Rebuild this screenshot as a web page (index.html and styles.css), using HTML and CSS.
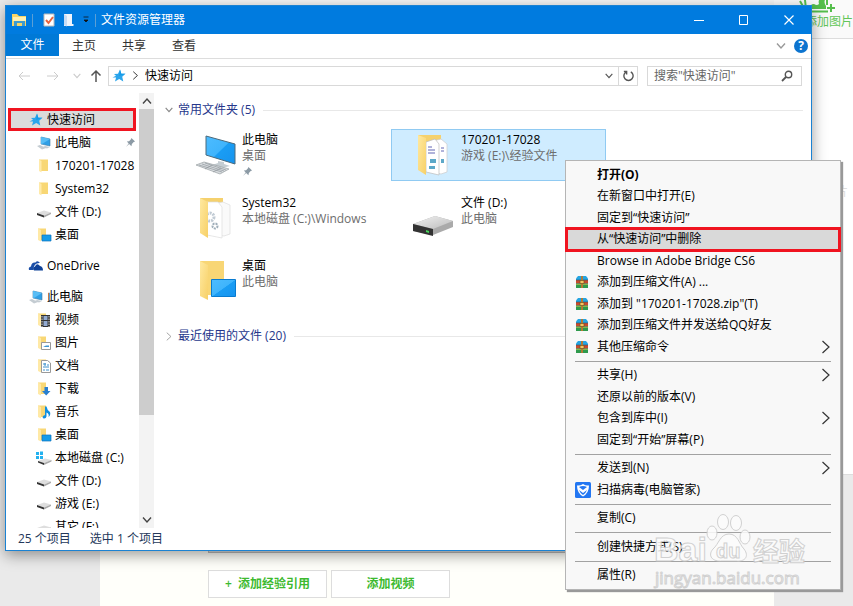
FILE: index.html
```html
<!DOCTYPE html>
<html lang="zh-CN">
<head>
<meta charset="utf-8">
<title>文件资源管理器</title>
<link rel="stylesheet" href="styles.css">
</head>
<body>
<svg class="defs" aria-hidden="true">
  <linearGradient id="gScreen" x1="0" y1="0" x2="1" y2="1"><stop offset="0" stop-color="#4dbcff"/><stop offset=".5" stop-color="#3fb4fc"/><stop offset=".52" stop-color="#1a9df4"/><stop offset="1" stop-color="#1693ee"/></linearGradient>
  <linearGradient id="gFold" x1="0" y1="0" x2="1" y2="1"><stop offset="0" stop-color="#ffe9a0"/><stop offset="1" stop-color="#f7d067"/></linearGradient>
  <linearGradient id="gDisk" x1="0" y1="0" x2="1" y2="1"><stop offset="0" stop-color="#f2f2f2"/><stop offset="1" stop-color="#bcbcbc"/></linearGradient>
  <symbol id="star" viewBox="0 0 14 14"><path d="M8 .5 9.300 4.700 13.500 4.800 10.200 7.700 11.300 12.500 7.200 10 3 12.600 4.100 8.500H.5L4 6.800 2 4.900 6 4.700z" fill="#2ba5ec"/><path d="M8 .5 9.300 4.700 13.500 4.800 7.200 7z" fill="#169be8"/></symbol>
  <symbol id="pc" viewBox="0 0 16 16"><path d="M5 2 14 4V11L5 9z" fill="#2f9fe6" stroke="#3f7ea8" stroke-width=".6"/><path d="M5 2 14 4 6 9 5 8.800z" fill="#58bdf5"/><path d="M9 11 14 12 11 13.500 7 12zM1 11 4 10 10 13 6 14.500z" fill="#c4ccd2"/></symbol>
  <symbol id="fold" viewBox="0 0 16 16"><path d="M3 1.500H12V13H3z" fill="#f8d775"/><path d="M3 1.500 5.500 3V14.500L3 13z" fill="#ffeaa9"/></symbol>
  <symbol id="desk" viewBox="0 0 16 16"><use href="#foldw"/><path d="M6 8H15V14H6z" fill="#159be9" stroke="#0b74bd" stroke-width=".7"/></symbol>
  <symbol id="foldw" viewBox="0 0 16 16"><path d="M2 1.500H10V13H2z" fill="#f8d775"/><path d="M2 1.500 5 3V14.500L2 13z" fill="#ffe9a6"/></symbol>
  <symbol id="drive" viewBox="0 0 16 16"><path d="M1 9 8 6.500 15 8.500 8 11.500z" fill="#dedede"/><path d="M1 9 8 11.500V13.500L1 11z" fill="#333"/><path d="M8 11.500 15 8.500V10L8 13.500z" fill="#aaa"/></symbol>
  <symbol id="winc" viewBox="0 0 16 16"><path d="M0 2H3V5H0zM4 1.500H7V5H4zM0 6H3V9H0zM4 6H7V9H4z" fill="#23b1ef"/><path d="M2 11 9 8.500 15.500 10 8 13z" fill="#dedede"/><path d="M2 11 8 13V15L2 12.500z" fill="#333"/><path d="M8 13 15.500 10V11.500L8 15z" fill="#aaa"/></symbol>
  <symbol id="cloud" viewBox="0 0 16 16"><path d="M1 12Q0 9 3 8.500 3.500 4 7.500 4.500 9.500 2 12 5 5.500 4.500 5.500 12z" fill="#1b4fa8"/><path d="M6 12.500Q4 9.500 7 8.500 9 4.500 12 8 15 8.500 15 12.500z" fill="#0f4298"/></symbol>
  <symbol id="video" viewBox="0 0 16 16"><use href="#foldw"/><path d="M5 3H14V15H5z" fill="#333"/><path d="M7.500 4H11.500V8H7.500zM7.500 9H11.500V14H7.500z" fill="#92aad0"/><path d="M6 4V15M13 4V15" stroke="#ddd" stroke-dasharray="1.500 1"/></symbol>
  <symbol id="pict" viewBox="0 0 16 16"><use href="#foldw"/><path d="M5.500 7.500H14.500V14.500H5.500z" fill="#fff" stroke="#999"/><path d="M7 12 10 10.500H13V12z" fill="#3d94d0"/></symbol>
  <symbol id="docs" viewBox="0 0 16 16"><use href="#foldw"/><path d="M5.500 2.500H11.500L14.500 5V14.500H5.500z" fill="#fff" stroke="#999"/><path d="M7 6H10M11 7H13M7 9H13M7 12H9M10 12H13M9 5V8" stroke="#3c91cc"/></symbol>
  <symbol id="down" viewBox="0 0 16 16"><use href="#foldw"/><path d="M8.500 6H12V10H14.500L10.200 14.500 6 10H8.500z" fill="#287fd0"/></symbol>
  <symbol id="music" viewBox="0 0 16 16"><use href="#foldw"/><path d="M9 2.500H10.500Q11 6 14 8 15 11 12.500 13 13.500 9.500 10.500 8.500V12.500Q10 15 7.500 14.500 5 12.500 9 11z" fill="#118fe0"/></symbol>
  <symbol id="pin" viewBox="0 0 12 12"><path d="M7 1 11 5 9.500 5.500 7.500 7.500 7 10 4.500 7.500 1 11 4 7 2 5 4.500 4.500 6.500 2.500z" fill="#8c9aa5"/></symbol>
  <symbol id="chevR" viewBox="0 0 10 14"><path d="M1.500 1 8 7 1.500 13" fill="none" stroke="currentColor" stroke-width="1.200"/></symbol>
  <symbol id="chevD" viewBox="0 0 12 8"><path d="M2 1.500 6 6 10 1.500" fill="none" stroke="currentColor" stroke-width="1.400"/></symbol>
  <symbol id="rar" viewBox="0 0 14 14"><path d="M3 1H11L13 3.500V5H1V3.500z" fill="#25a5e2"/><path d="M1 5H13V8H1z" fill="#c94a2c"/><path d="M1 8H13V10H1z" fill="#e3d54a"/><path d="M1 9.500H13V13H1z" fill="#2f9a4d"/><path d="M1 5H13M1 8.500H13" stroke="#29506b" stroke-width=".6"/><path d="M6 1H8V13H6z" fill="#b27a35"/><path d="M5 5.500H9V8.500H5z" fill="#f4c563" stroke="#725522" stroke-width=".7"/></symbol>
</svg>

<div class="page">
  <div class="gutter"></div>
  <main class="editor">
    <div class="textarea-edge"></div>
    <div class="actions">
      <button class="add" type="button">+&nbsp; 添加经验引用</button>
      <button class="add" type="button">添加视频</button>
    </div>
  </main>
  <aside class="side">
    <div class="side-tools">
      <svg class="picture" viewBox="0 0 40 14"><path d="M4 1 9 10M9 0 10 9M4 6 10 10" fill="none" stroke="#55be4c" stroke-width="2"/><path d="M13 11.500H32M31 0V5" fill="none" stroke="#55be4c" stroke-width="2"/><path d="M13 9Q14 4 18 4 21 6 23 4 22 1 24-2H30Q27 2 30 6V9z" fill="#55be4c"/><path d="M31 8H39M35 4V12" stroke="#55be4c" stroke-width="2"/></svg>
      <a class="side-link" href="#">添加图片</a>
    </div>
    <div class="side-body"><span>图片</span></div>
    <div class="side-foot"></div>
  </aside>
</div>

<section class="window">
  <header class="titlebar">
    <svg class="t-folder" viewBox="0 0 16 14"><path d="M1 1H6L8 3H15V13H1z" fill="#f7d568"/><path d="M2 4H15V8H2z" fill="#fff0b0"/><path d="M3 13V8H14V13H11V10H6V13z" fill="#3d9bd1"/></svg>
    <i class="bar"></i>
    <svg class="t-check" viewBox="0 0 12 14"><path d="M1 1H11V13H1z" fill="#fff" stroke="#bbb"/><path d="M3 7 5.500 10 10 4" fill="none" stroke="#e8643f" stroke-width="2"/></svg>
    <svg class="t-new" viewBox="0 0 12 14"><path d="M1 1H9V11H10.500V13H1z" fill="#f0f4fb"/><path d="M1 1 4 3V13.500L1 12z" fill="#c8dcf5"/></svg>
    <svg class="t-drop" viewBox="0 0 8 8"><path d="M1.500 1H6.500M2 4H6L4 6z" fill="#111" stroke="#111" stroke-width=".8"/></svg>
    <i class="bar"></i>
    <h1>文件资源管理器</h1>
    <div class="controls">
      <button type="button" aria-label="最小化"><svg viewBox="0 0 12 12"><path d="M1 6.500H11" stroke="#fff"/></svg></button>
      <button type="button" aria-label="最大化"><svg viewBox="0 0 12 12"><path d="M1.500 1.500H9.500V10.500H1.500z" fill="none" stroke="#fff"/></svg></button>
      <button type="button" aria-label="关闭"><svg viewBox="0 0 12 12"><path d="M1.500 1.500 10.500 10.500M10.500 1.500 1.500 10.500" stroke="#fff" stroke-width="1.200"/></svg></button>
    </div>
  </header>
  <nav class="tabs">
    <button type="button" class="file">文件</button>
    <button type="button">主页</button>
    <button type="button">共享</button>
    <button type="button">查看</button>
    <svg class="expand" viewBox="0 0 12 8"><use href="#chevD"/></svg>
    <button type="button" class="help" aria-label="帮助">?</button>
  </nav>
  <div class="address">
    <svg class="arrow off" viewBox="0 0 14 12"><path d="M12 6H1M5 2 1 6 5 10" fill="none" stroke="currentColor"/></svg>
    <svg class="arrow off" viewBox="0 0 14 12"><path d="M2 6H13M9 2 13 6 9 10" fill="none" stroke="currentColor"/></svg>
    <svg class="small off" viewBox="0 0 12 8"><use href="#chevD"/></svg>
    <svg class="up" viewBox="0 0 12 14"><path d="M6 13V2M1.500 6.500 6 2 10.500 6.500" fill="none" stroke="currentColor" stroke-width="1.500"/></svg>
    <div class="path">
      <svg class="i14"><use href="#star"/></svg>
      <svg class="crumb"><use href="#chevR"/></svg>
      <span>快速访问</span>
      <svg class="small"><use href="#chevD"/></svg>
      <button type="button" class="refresh" aria-label="刷新"><svg viewBox="0 0 14 14"><path d="M9.500 3A5 5 0 1 1 4.500 3M2 2.500H5V6" fill="none" stroke="#555" stroke-width="1.500"/></svg></button>
    </div>
    <label class="search"><input type="text" aria-label="搜索" placeholder='搜索"快速访问"'>
      <svg viewBox="0 0 12 12"><circle cx="7.500" cy="4.500" r="3.200" fill="none" stroke="#555" stroke-width="1.400"/><path d="M5 7 1 11" stroke="#555" stroke-width="1.800"/></svg></label>
  </div>
  <div class="body">
    <nav class="tree">
      <ul>
        <li><a class="top active" href="#"><svg><use href="#star"/></svg>快速访问</a></li>
        <li><a href="#"><svg><use href="#pc"/></svg>此电脑<svg class="pin"><use href="#pin"/></svg></a></li>
        <li><a href="#"><svg><use href="#fold"/></svg>170201-17028</a></li>
        <li><a href="#"><svg><use href="#fold"/></svg>System32</a></li>
        <li><a href="#"><svg><use href="#drive"/></svg>文件 (D:)</a></li>
        <li><a href="#"><svg><use href="#desk"/></svg>桌面</a></li>
      </ul>
      <ul>
        <li><a class="top" href="#"><svg><use href="#cloud"/></svg>OneDrive</a></li>
      </ul>
      <ul>
        <li><a class="top" href="#"><svg><use href="#pc"/></svg>此电脑</a></li>
        <li><a href="#"><svg><use href="#video"/></svg>视频</a></li>
        <li><a href="#"><svg><use href="#pict"/></svg>图片</a></li>
        <li><a href="#"><svg><use href="#docs"/></svg>文档</a></li>
        <li><a href="#"><svg><use href="#down"/></svg>下载</a></li>
        <li><a href="#"><svg><use href="#music"/></svg>音乐</a></li>
        <li><a href="#"><svg><use href="#desk"/></svg>桌面</a></li>
        <li><a href="#"><svg><use href="#winc"/></svg>本地磁盘 (C:)</a></li>
        <li><a href="#"><svg><use href="#drive"/></svg>文件 (D:)</a></li>
        <li><a href="#"><svg><use href="#drive"/></svg>游戏 (E:)</a></li>
        <li><a href="#"><svg><use href="#drive"/></svg>其它 (F:)</a></li>
      </ul>
    </nav>
    <div class="scroll">
      <svg class="flip"><use href="#chevD"/></svg>
      <div class="track"><div class="thumb"></div></div>
      <svg><use href="#chevD"/></svg>
    </div>
    <div class="content">
      <h2><svg class="small"><use href="#chevD"/></svg>常用文件夹 (5)</h2>
      <div class="tiles">
        <article class="tile">
          <svg viewBox="0 0 48 48"><path d="M18 6 47 14V34L18 25z" fill="url(#gScreen)" stroke="#4b6a7c"/><path d="M30 31 36 32V34L42 36 34 38 24 35 30 33z" fill="#c5cdd2"/><path d="M8 35 16 32 41 39 32 44z" fill="#d8dcdf" stroke="#9aa0a4" stroke-width=".7"/><path d="M11 35 34 42M14 34 36 41M17 33 38 40M17 39 24 35M25 42 33 38" stroke="#91989d" stroke-width=".7"/></svg>
          <div><b>此电脑</b><span>桌面</span><svg class="pin"><use href="#pin"/></svg></div>
        </article>
        <article class="tile selected">
          <svg viewBox="0 0 48 48"><path d="M11 5H34V38H11z" fill="#f5d16e"/><path d="M22 12 34 9 40 14V42L34 44 22 41z" fill="#fff" stroke="#ccc" stroke-width=".7"/><path d="M19 12 28 9 32 14V45L19 42z" fill="#fff" stroke="#bbb" stroke-width=".7"/><path d="M21 17H25M21 20H28M21 23H28M34 18H37M34 21H37" stroke="#6366b5"/><path d="M23 29H29V33H23zM22 36H28V39H22zM34 29H37V33H34z" fill="#5da8c8"/><path d="M11 5 19 8V45L11 40z" fill="url(#gFold)"/></svg>
          <div><b>170201-17028</b><span>游戏 (E:)\经验文件</span></div>
        </article>
        <article class="tile">
          <svg viewBox="0 0 48 48"><path d="M12 5H35V38H12z" fill="#f5d16e"/><path d="M22 11 35 9 42 12V41L36 43 22 41z" fill="#fafafa" stroke="#ddd" stroke-width=".7"/><path d="M19 9 30 9 34 14V45L19 42z" fill="#fff" stroke="#ddd" stroke-width=".7"/><circle cx="22" cy="24" r="4" fill="none" stroke="#c1cbd4" stroke-width="3" stroke-dasharray="2 1"/><circle cx="27" cy="33" r="2.500" fill="none" stroke="#9faeb9" stroke-width="2" stroke-dasharray="2 1"/><path d="M12 5 20 9V45L12 40z" fill="url(#gFold)"/></svg>
          <div><b>System32</b><span>本地磁盘 (C:)\Windows</span></div>
        </article>
        <article class="tile">
          <svg viewBox="0 0 48 48"><path d="M6 31 28 23 46 28V34L26 42 6 38z" fill="#aaa"/><path d="M6 31 28 23 46 28 26 36z" fill="url(#gDisk)"/><path d="M6 31 26 36V43L6 38z" fill="#333"/><path d="M19 37 22 38V40L19 39z" fill="#47d75a"/></svg>
          <div><b>文件 (D:)</b><span>此电脑</span></div>
        </article>
        <article class="tile">
          <svg viewBox="0 0 48 48"><path d="M12 5H36V39H12z" fill="#f8d675"/><path d="M12 5 20 9V44L12 40z" fill="url(#gFold)"/><path d="M23.500 23.500H47.500V40.500H23.500z" fill="url(#gScreen)" stroke="#087bd0"/></svg>
          <div><b>桌面</b><span>此电脑</span></div>
        </article>
      </div>
      <h2><svg class="crumb"><use href="#chevR"/></svg>最近使用的文件 (20)</h2>
    </div>
  </div>
  <footer class="status"><span>25 个项目</span><span>选中 1 个项目</span></footer>
</section>

<div class="menu" role="menu">
  <button type="button" role="menuitem" class="bold">打开(O)</button>
  <button type="button" role="menuitem">在新窗口中打开(E)</button>
  <button type="button" role="menuitem">固定到“快速访问”</button>
  <button type="button" role="menuitem" class="hot">从“快速访问”中删除</button>
  <button type="button" role="menuitem">Browse in Adobe Bridge CS6</button>
  <button type="button" role="menuitem"><svg class="ico"><use href="#rar"/></svg>添加到压缩文件(A) ...</button>
  <button type="button" role="menuitem"><svg class="ico"><use href="#rar"/></svg>添加到 "170201-17028.zip"(T)</button>
  <button type="button" role="menuitem"><svg class="ico"><use href="#rar"/></svg>添加到压缩文件并发送给QQ好友</button>
  <button type="button" role="menuitem"><svg class="ico"><use href="#rar"/></svg>其他压缩命令<svg class="more"><use href="#chevR"/></svg></button>
  <hr>
  <button type="button" role="menuitem">共享(H)<svg class="more"><use href="#chevR"/></svg></button>
  <button type="button" role="menuitem">还原以前的版本(V)</button>
  <button type="button" role="menuitem">包含到库中(I)<svg class="more"><use href="#chevR"/></svg></button>
  <button type="button" role="menuitem">固定到“开始”屏幕(P)</button>
  <hr>
  <button type="button" role="menuitem">发送到(N)<svg class="more"><use href="#chevR"/></svg></button>
  <button type="button" role="menuitem"><svg class="ico shield" viewBox="0 0 16 16"><rect width="16" height="16" rx="1.500" fill="#2377f2"/><path d="M8 2Q11 4 14 3.500 14 11 8 14.500 2 11 2 3.500 5 4 8 2z" fill="#fff"/><path d="M4 5Q8 3 12 5L8 8zM4 8 8 11 12 8Q11 11 8 13 5 11 4 8z" fill="#2377f2"/></svg>扫描病毒(电脑管家)</button>
  <hr>
  <button type="button" role="menuitem">复制(C)</button>
  <hr>
  <button type="button" role="menuitem">创建快捷方式(S)</button>
  <hr>
  <button type="button" role="menuitem">属性(R)</button>
</div>

<div class="watermark">
  <svg viewBox="0 0 156 76">
    <g class="mark">
      <text x="1" y="48" class="latin">Bai</text>
      <ellipse cx="59" cy="20" rx="5" ry="7"/><ellipse cx="70" cy="9" rx="5.500" ry="7.500"/><ellipse cx="83" cy="10" rx="5.500" ry="7.500"/><ellipse cx="92" cy="24" rx="5" ry="7"/>
      <path d="M76 21C85 21 86 31 91 36 97 44 91 49 83 48H69C60 49 54 43 60 36 66 31 67 21 76 21z"/>
      <text x="63" y="45" class="du">du</text>
      <text x="100" y="48" class="han">经验</text>
      <text x="2" y="71" class="url">jingyan.baidu.com</text>
    </g>
  </svg>
</div>
</body>
</html>
```
FILE: styles.css
```css
* { box-sizing: border-box; }
body, button, input {
  font: 12px/16px "Open Sans", "Noto Sans CJK SC", sans-serif;
  color: #000;
}
body { margin: 0; height: 100vh; overflow: hidden; }
button { border: 0; padding: 0; background: none; }
a { color: inherit; text-decoration: none; }
ul, h1, h2 { margin: 0; padding: 0; list-style: none; font-size: 12px; font-weight: 400; }
svg { flex: none; display: block; }
.defs { position: absolute; width: 0; height: 0; }

/* web page behind the window */
.page { display: grid; grid-template-columns: 100px 1fr 79px; height: 100vh; }
.gutter, .side-foot { background: #eaeaea; }
.editor {
  display: flex; flex-direction: column; justify-content: flex-end; gap: 17px;
  padding: 0 0 8px 108px; background: #fffffa; border-top: 5px solid #f5f5f5;
}
.textarea-edge { height: 40px; border: 1px solid #bbb; background: #ddd; }
.actions { display: flex; gap: 4px; }
.add {
  width: 119px; height: 28px; border: 1px solid #ddd; background: #fff;
  color: #3dba2f; font-weight: 600;
}
.side { display: flex; flex-direction: column; background: #fff; }
.side-tools {
  display: flex; flex-direction: column; align-items: flex-end;
  height: 39px; border-bottom: 1px solid #ddd; background: #fafafa;
}
.picture { width: 40px; height: 14px; margin-right: 17px; }
.side-link { color: #62c658; white-space: nowrap; }
.side-body { flex: 1; padding: 145px 5px 0 0; text-align: right; color: #ddd; }
.side-foot { height: 132px; border-top: 1px solid #ddd; }

/* explorer window */
.window {
  position: absolute; inset: 5px 41px 55px 5px;
  display: flex; flex-direction: column;
  background: #fff; border: 1px solid #1b82d2;
  box-shadow: 0 4px 14px rgba(0, 0, 0, .4);
}
.titlebar {
  display: flex; align-items: center; flex: none; height: 28px;
  padding-left: 5px; background: #007bdf; color: #fff;
}
.t-folder { width: 16px; height: 14px; }
.t-check { width: 12px; height: 14px; margin-left: 5px; }
.t-new { width: 12px; height: 14px; margin-left: 8px; }
.t-drop { width: 8px; height: 8px; margin-left: 7px; }
.bar { width: 1px; height: 13px; margin: 0 5px; background: #5b9fd5; }
.controls { display: flex; margin-left: auto; }
.controls button { width: 45px; height: 28px; display: grid; place-items: center; }
.controls svg { width: 12px; height: 12px; }
.tabs {
  display: flex; align-items: center; flex: none; height: 25px;
  padding-right: 3px; border-bottom: 1px solid #ddd;
}
.tabs button { width: 50px; height: 22px; color: #333; }
.tabs .file { width: 53px; background: #0079d7; color: #fff; align-self: flex-start; }
.tabs .expand { width: 12px; height: 8px; margin: 0 7px 0 auto; color: #999; }
.tabs .help {
  width: 14px; height: 14px; border-radius: 50%; background: #0c74cf;
  color: #fff; font-weight: 700; line-height: 14px;
}
.address { display: flex; align-items: center; flex: none; height: 33px; padding: 0 9px 0 12px; color: #555; }
.arrow { width: 14px; height: 12px; margin-right: 13px; }
.off { color: #ccc; }
.small { width: 10px; height: 8px; }
.up { width: 12px; height: 14px; margin: 0 6px 0 8px; }
.path {
  display: flex; align-items: center; flex: 1; height: 20px; min-width: 0;
  border: 1px solid #d9d9d9; padding-left: 3px; color: #000;
}
.path .small { margin-left: auto; margin-right: 4px; color: #555; }
.i14 { width: 14px; height: 14px; }
.crumb { width: 7px; height: 9px; }
.path .crumb { margin: 0 6px; }
.refresh { width: 19px; height: 18px; border-left: 1px solid #d9d9d9; display: grid; place-items: center; }
.refresh svg { width: 13px; height: 13px; }
.search {
  display: flex; align-items: center; width: 155px; height: 20px; margin-left: 9px;
  border: 1px solid #d9d9d9; padding: 0 8px 0 6px;
}
.search input { flex: 1; min-width: 0; border: 0; padding: 0; outline: 0; background: none; }
.search input::placeholder { color: #666; opacity: 1; }
.search svg { width: 12px; height: 12px; }
.body { display: flex; flex: 1; min-height: 0; }
.tree { width: 133px; padding-top: 16px; overflow: hidden; white-space: nowrap; }
.tree ul + ul { margin-top: 8px; }
.tree a { display: flex; align-items: center; gap: 3px; height: 23px; padding-left: 30px; }
.tree .top { padding-left: 22px; }
.tree svg { width: 16px; height: 16px; }
.tree .active { margin: 0 3px 0 2px; padding-left: 20px; background: #dbdbdb; outline: 3px solid #f01420; outline-offset: -3px; }
.tree .active svg { width: 14px; height: 14px; margin: 0 1px; }
.tree .pin { width: 11px; height: 11px; margin: 0 3px 0 auto; }
.scroll { display: flex; flex-direction: column; align-items: center; width: 15px; margin-top: 1px; background: #f3f3f3; color: #444; }
.scroll svg { width: 12px; height: 8px; margin: 4px 0; }
.scroll .flip { transform: scaleY(-1); }
.track { flex: 1; width: 100%; }
.thumb { height: 76%; background: #cdcdcd; }
.content { flex: 1; min-width: 0; padding: 9px 8px 0 10px; }
h2 { display: flex; align-items: center; gap: 4px; color: #26378b; height: 18px; }
h2::after { content: ""; flex: 1; height: 1px; margin-left: 4px; background: #e8e8e8; }
h2 svg { color: #888; }
h2 .crumb { width: 10px; }
.tiles { display: grid; grid-template-columns: 215px 215px; gap: 11px 4px; padding: 10px 0 20px 8px; }
.tile { display: flex; gap: 6px; height: 52px; padding-left: 15px; border: 1px solid transparent; }
.tile > svg { width: 48px; height: 48px; }
.tile b, .tile span { display: block; font-weight: 400; white-space: nowrap; }
.tile b { padding-top: 2px; }
.tile span { color: #6d6d6d; }
.tile .pin { width: 11px; height: 11px; margin-top: 2px; }
.selected { background: #cfecff; border-color: #90caf2; }
.status { display: flex; align-items: center; gap: 19px; flex: none; height: 22px; padding-left: 12px; color: #24385a; }

/* context menu */
.menu {
  position: absolute; left: 565px; top: 160px; bottom: 16px; width: 276px;
  display: flex; flex-direction: column; padding: 3px 1px;
  background: #f8f8f8; border: 1px solid #b5b5b5;
  box-shadow: 2px 2px 1px #999;
}
.menu button {
  flex: 1; min-height: 0; display: flex; align-items: center; position: relative;
  padding-left: 30px; white-space: nowrap; text-align: left;
}
.menu .bold { font-weight: 700; }
.menu .hot { background: #d9d9d9; outline: 3px solid #f01420; }
.menu hr { width: auto; height: 1px; margin: 3px 8px; border: 0; background: #a2a2a2; align-self: stretch; flex: none; }
.menu .ico { position: absolute; left: 8px; width: 14px; height: 14px; }
.menu .shield { width: 16px; height: 16px; }
.menu .more { width: 10px; height: 14px; margin: 0 8px 0 auto; color: #333; }
.menu .hot { outline-offset: -1px; }

.watermark { position: absolute; left: 653px; top: 513px; width: 156px; pointer-events: none; }
.mark { fill: #fcfcfc; stroke: #cacaca; stroke-width: 1; opacity: .85; font-family: "Liberation Sans", sans-serif; }
.latin { font-size: 34px; font-weight: 700; }
.du { font-size: 20px; font-weight: 700; }
.han { font: 700 26px "Noto Sans CJK SC", sans-serif; }
.url { font: 17px "Open Sans", sans-serif; }
```
